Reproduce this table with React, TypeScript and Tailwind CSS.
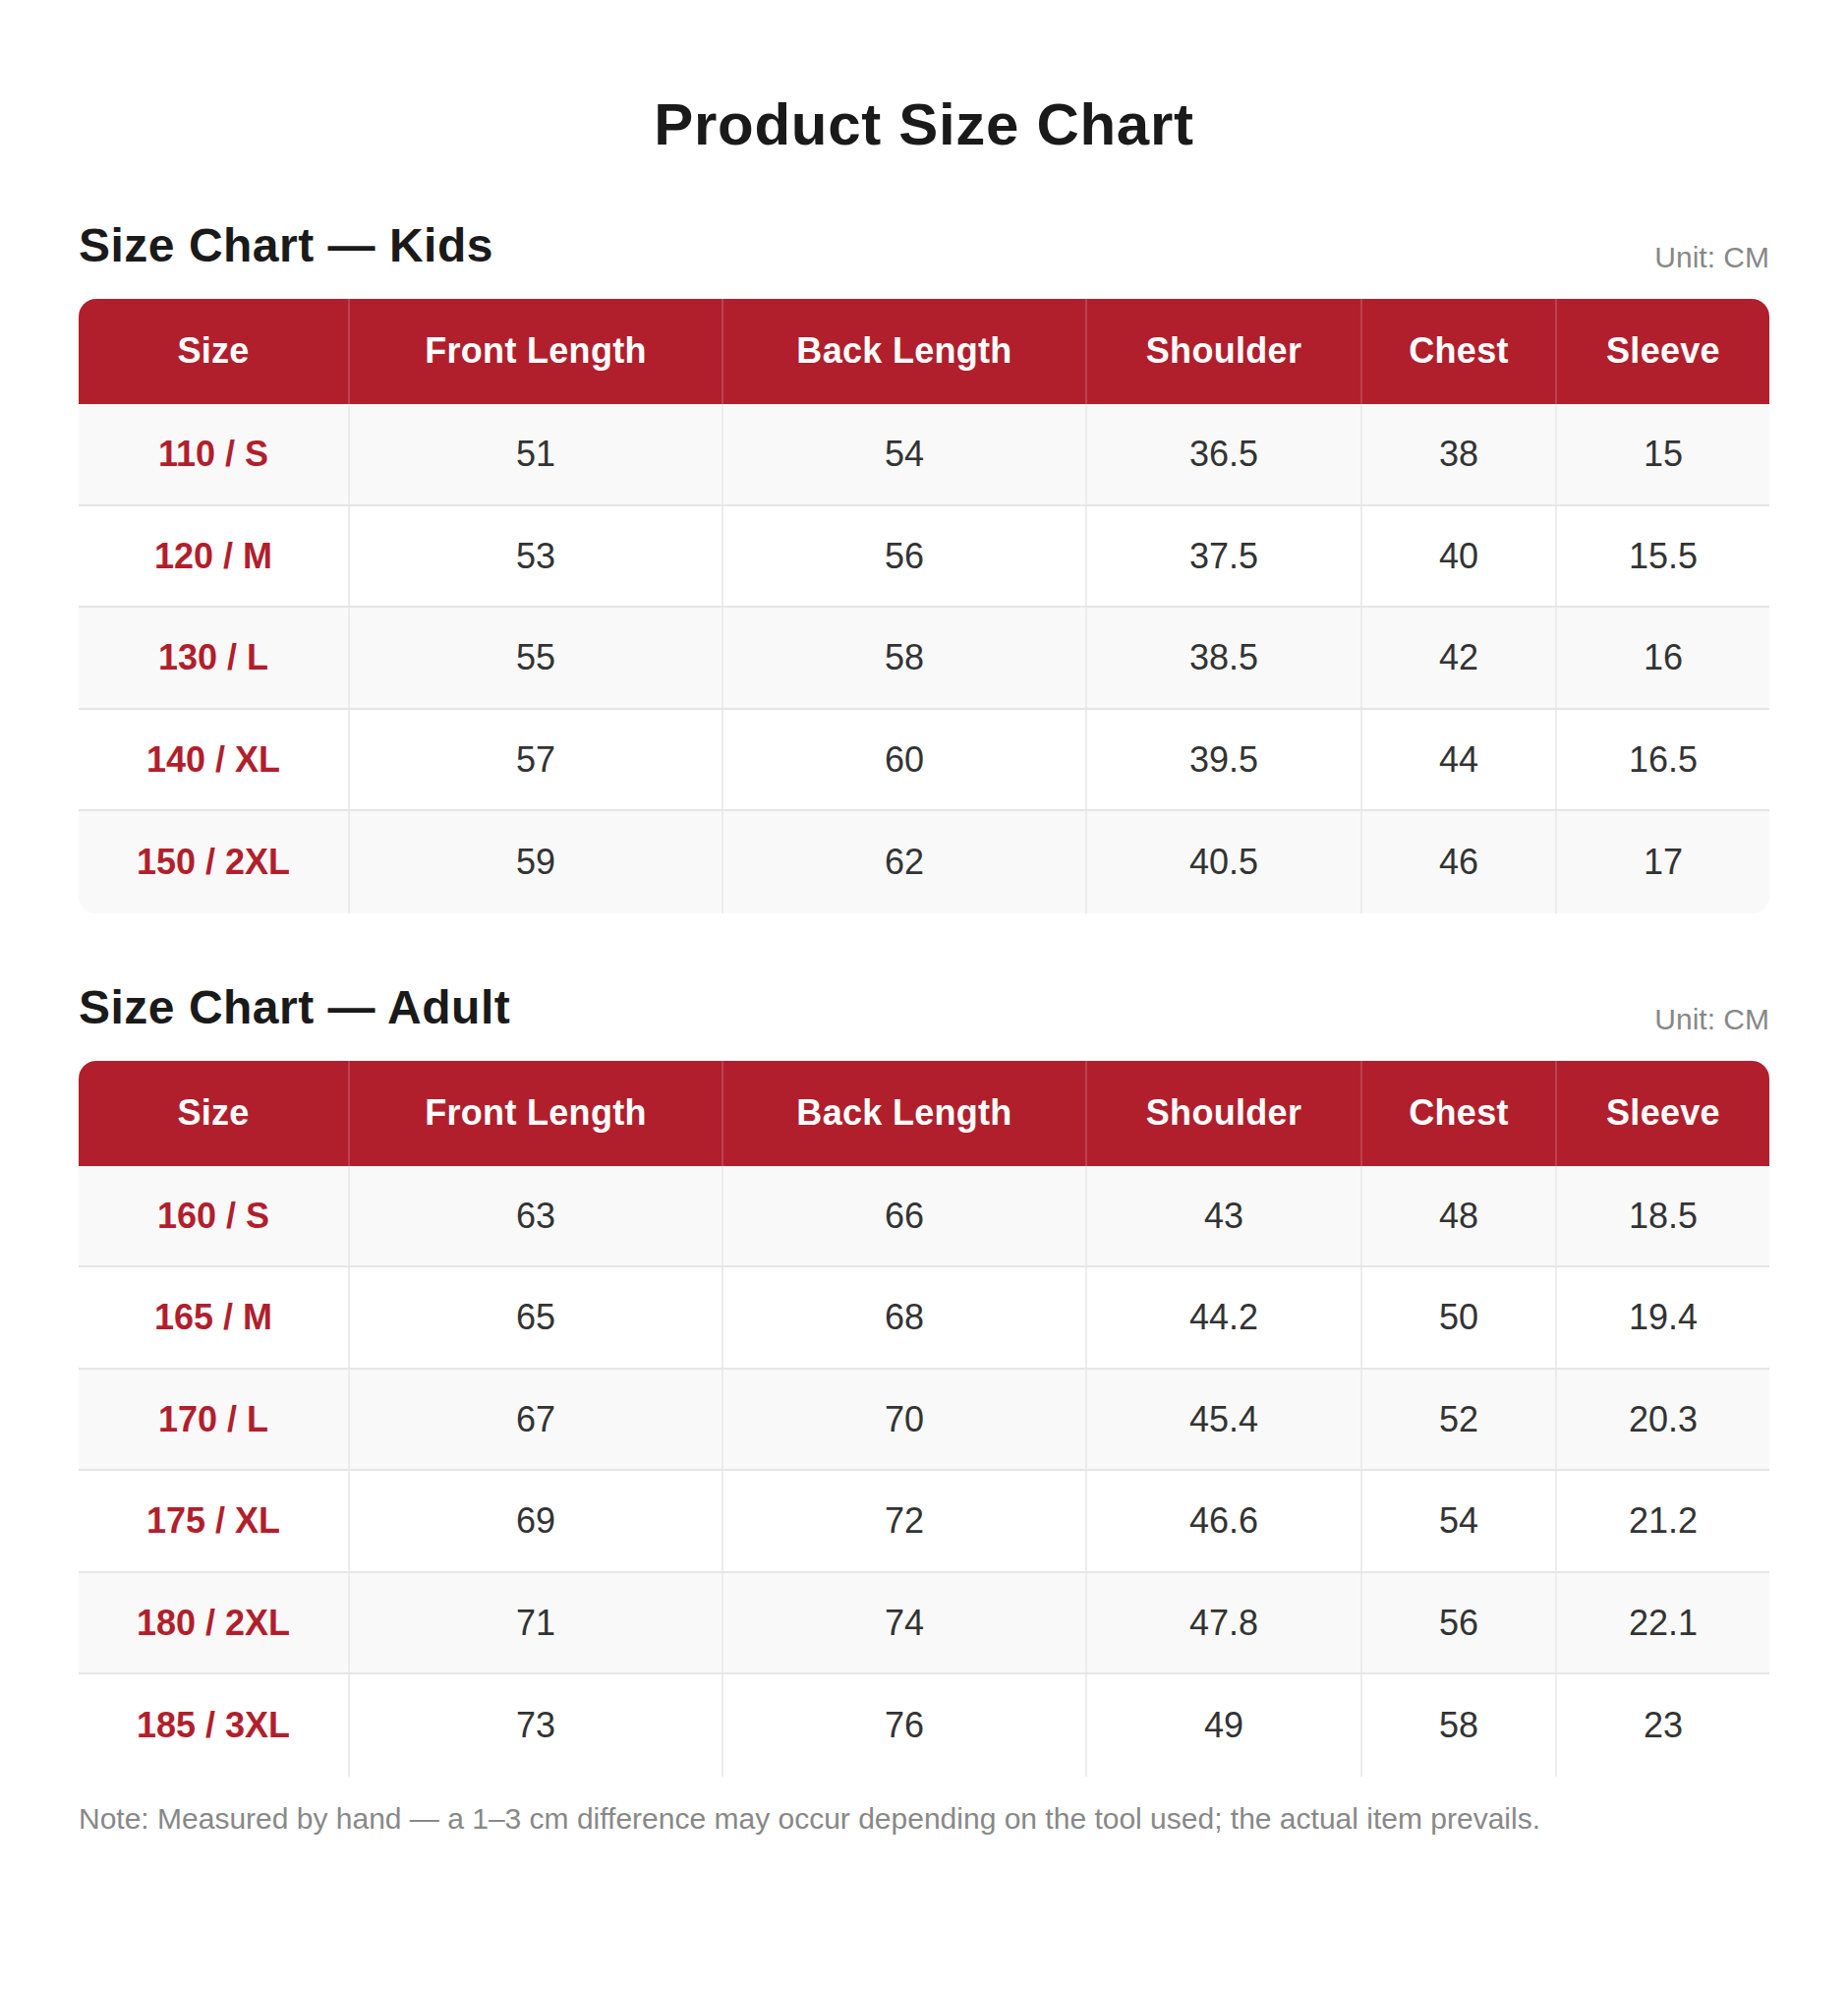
import React from "react";

type Row = [string, string, string, string, string, string];

const HEAD = ["Size", "Front Length", "Back Length", "Shoulder", "Chest", "Sleeve"];

const KIDS: Row[] = [
  ["110 / S", "51", "54", "36.5", "38", "15"],
  ["120 / M", "53", "56", "37.5", "40", "15.5"],
  ["130 / L", "55", "58", "38.5", "42", "16"],
  ["140 / XL", "57", "60", "39.5", "44", "16.5"],
  ["150 / 2XL", "59", "62", "40.5", "46", "17"],
];

const ADULT: Row[] = [
  ["160 / S", "63", "66", "43", "48", "18.5"],
  ["165 / M", "65", "68", "44.2", "50", "19.4"],
  ["170 / L", "67", "70", "45.4", "52", "20.3"],
  ["175 / XL", "69", "72", "46.6", "54", "21.2"],
  ["180 / 2XL", "71", "74", "47.8", "56", "22.1"],
  ["185 / 3XL", "73", "76", "49", "58", "23"],
];

const GRID = "grid grid-cols-[274px_380px_370px_280px_198px_218px]";

function SizeTable({ title, rows }: { title: string; rows: Row[] }) {
  return (
    <section>
      <div className="flex items-end justify-between">
        <h2 className="text-[48px] leading-[58px] font-bold text-[#1a1a1a] tracking-[0.5px]">{title}</h2>
        <span className="text-[30px] leading-[34px] text-[#888888]">Unit: CM</span>
      </div>
      <div className="mt-[25px] rounded-[18px] overflow-hidden">
        <div className={`${GRID} h-[107px] bg-[#b11f2d]`}>
          {HEAD.map((h, i) => (
            <div
              key={h}
              className={`flex items-center justify-center pb-[1px] text-[36px] font-bold text-white tracking-[0.3px] ${
                i > 0 ? "border-l-2 border-[#bd414d]" : ""
              }`}
            >
              {h}
            </div>
          ))}
        </div>
        {rows.map((r, ri) => (
          <div
            key={r[0]}
            className={`${GRID} h-[103.5px] ${ri % 2 === 0 ? "bg-[#f9f9f9]" : "bg-white"} ${
              ri < rows.length - 1 ? "border-b-2 border-[#e6e6e6]" : ""
            }`}
          >
            {r.map((c, ci) => (
              <div
                key={ci}
                className={`flex items-center justify-center pt-[1px] text-[36px] ${
                  ci === 0 ? "font-bold text-[#b11f2d]" : "text-[#333333] border-l-2 border-[#ececec]"
                }`}
              >
                {c}
              </div>
            ))}
          </div>
        ))}
      </div>
    </section>
  );
}

export default function App() {
  return (
    <div className="min-h-[2024px] w-full bg-white px-[80px] pt-[91px] font-['Liberation_Sans',Arial,sans-serif]">
      <h1 className="text-center text-[60px] leading-[72px] font-bold text-[#1a1a1a] tracking-[0.7px]">
        Product Size Chart
      </h1>
      <div className="mt-[58px]">
        <SizeTable title="Size Chart — Kids" rows={KIDS} />
      </div>
      <div className="mt-[67px]">
        <SizeTable title="Size Chart — Adult" rows={ADULT} />
      </div>
      <p className="mt-[20px] text-[30px] leading-[45px] text-[#888888]">
        Note: Measured by hand — a 1–3 cm difference may occur depending on the tool used; the actual item prevails.
      </p>
    </div>
  );
}
